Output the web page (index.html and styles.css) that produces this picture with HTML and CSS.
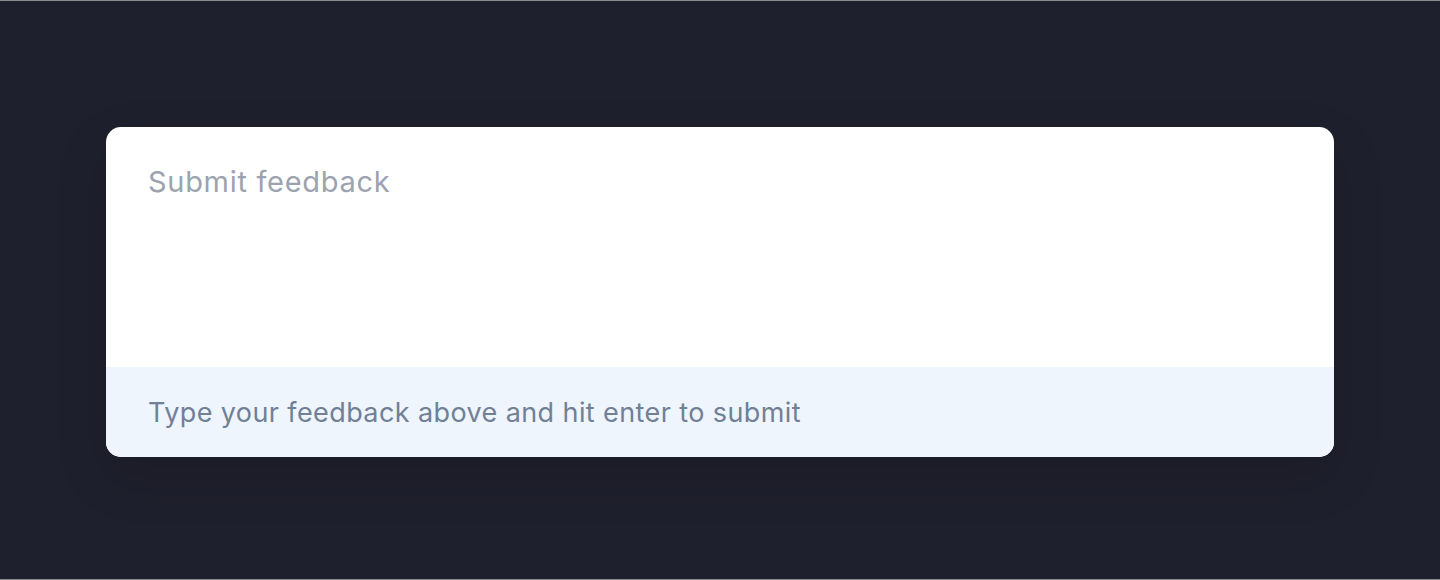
FILE: index.html
```html
<!DOCTYPE html>
<html lang="en">
<head>
    <meta charset="UTF-8">
    <meta name="viewport" content="width=device-width, initial-scale=1.0">
    <title>Feedback</title>
    <link rel="stylesheet" href="styles.css">
</head>
<body>
    <main class="page">
        <form class="feedback-card">
            <textarea class="feedback-input" placeholder="Submit feedback"></textarea>
            <div class="feedback-hint">
                <p>Type your feedback above and hit enter to submit</p>
            </div>
        </form>
    </main>
</body>
</html>
```

FILE: styles.css
```css
html, body {
    margin: 0;
    padding: 0;
}

body {
    font-family: Inter, "Noto Sans", sans-serif;
    background-color: #1f202d;
    height: 580px;
    box-sizing: border-box;
    border-top: 1px solid #8c8d93;
    border-bottom: 1px solid #8c8d93;
}

.page {
    padding: 126px 106px 0;
}

.feedback-card {
    background-color: #fff;
    border-radius: 15px;
    overflow: hidden;
    display: flex;
    flex-direction: column;
    box-shadow: 0 20px 50px rgba(0, 0, 0, 0.15);
}

.feedback-input {
    height: 240px;
    box-sizing: border-box;
    border: none;
    outline: none;
    resize: none;
    padding: 37px 42px;
    font-family: inherit;
    font-size: 29px;
    letter-spacing: 0.7px;
    color: #374151;
    background: transparent;
}

.feedback-input::placeholder {
    color: #9ca3af;
}

.feedback-hint {
    height: 90px;
    background-color: #eef5fd;
    display: flex;
    align-items: center;
    padding: 0 42px;
}

.feedback-hint p {
    margin: 0;
    font-size: 27px;
    letter-spacing: 0.4px;
    color: #718096;
}
```
